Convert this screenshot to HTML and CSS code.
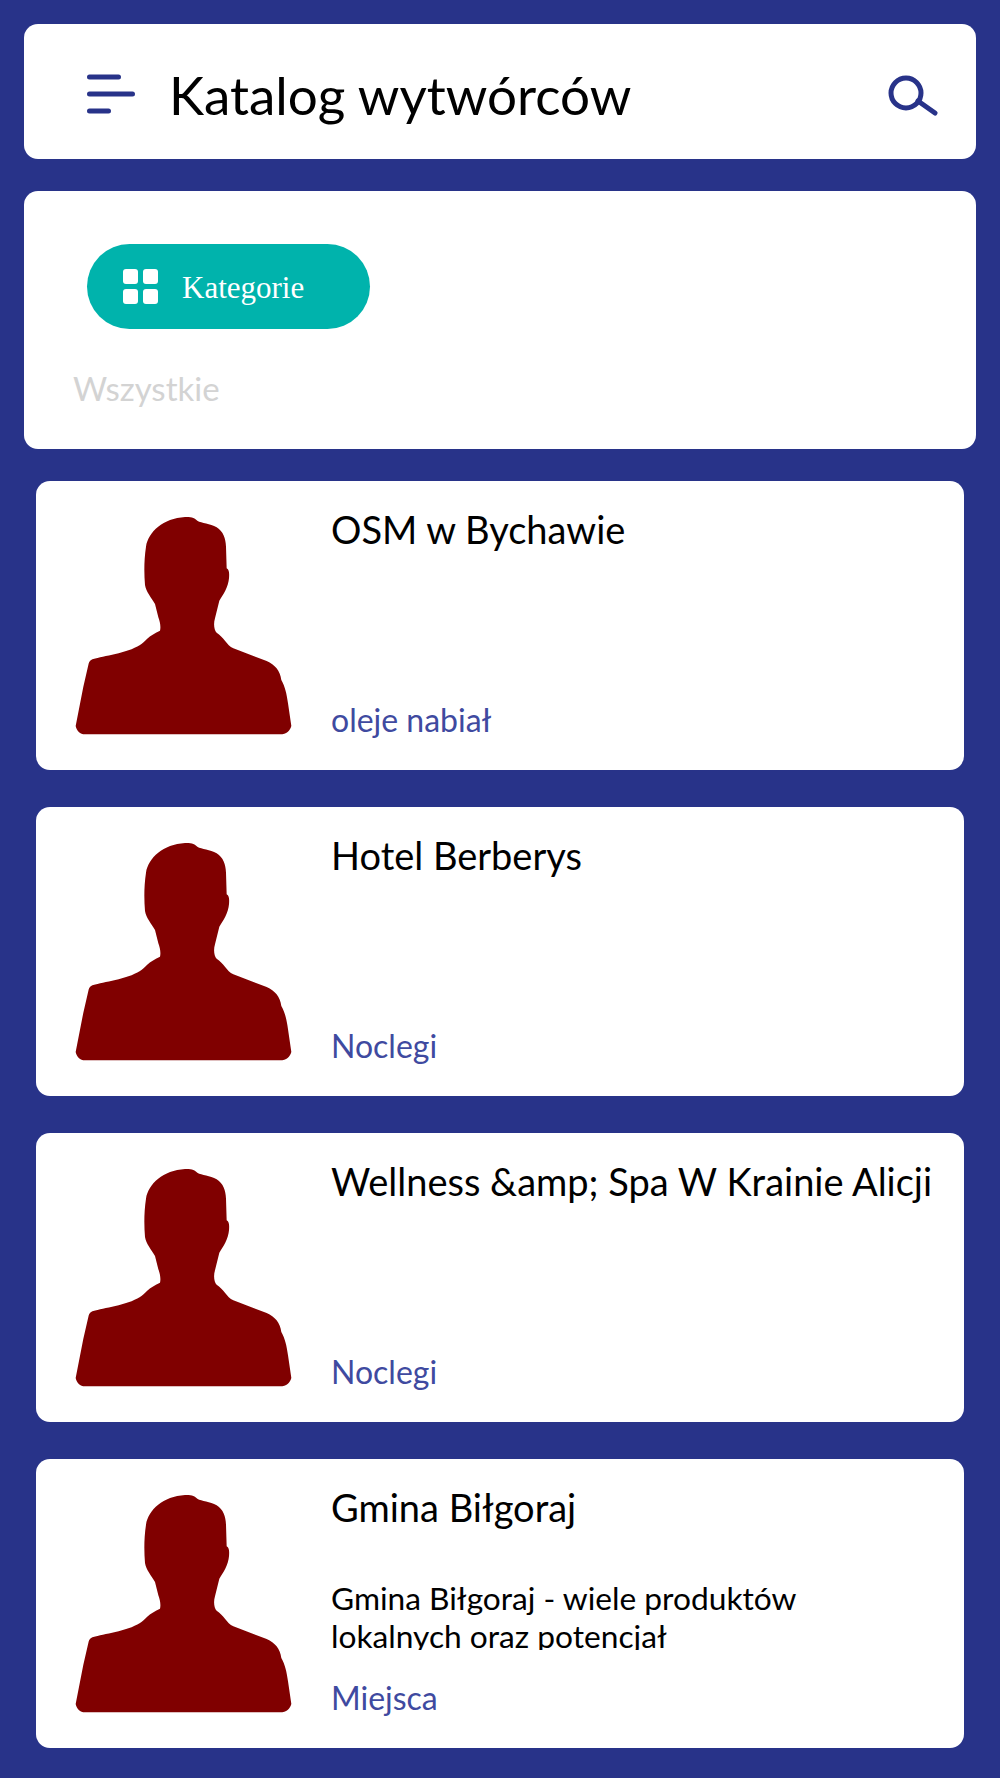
FILE: index.html
```html
<!DOCTYPE html>
<html lang="pl">
<head>
    <meta charset="UTF-8">
    <meta name="viewport" content="width=device-width, initial-scale=1.0">
    <title>Katalog wytwórców</title>
    <link rel="stylesheet" href="styles.css">
</head>
<body>
    <svg class="sprite" width="0" height="0">
        <symbol id="avatar" viewBox="0 0 780 840">
            <path d="M75 733C60 733 50 722 47 708L70 590L85 525C88 512 92 510 100 507C130 498 200 490 240 465C255 455 265 437 300 422C303 410 300 395 295 382L285 342C275 325 258 305 255 285C252 250 252 210 258 170C265 125 310 85 375 81C395 80 405 85 412 92C425 100 450 100 470 112C490 125 497 145 498 170L500 235C508 240 508 250 507 265C505 290 490 315 478 332L465 385C460 400 462 420 470 428C490 440 500 465 520 475L620 513C645 525 660 540 664 570C675 590 680 610 684 640L694 708C690 722 680 733 660 733Z"/>
        </symbol>
    </svg>

    <header class="topbar">
        <svg class="menu-icon" width="48" height="40" viewBox="0 0 48 40">
            <path d="M2.500 3H31.500M2.500 20H45.500M2.500 37H21.500"/>
        </svg>
        <h1 class="page-title">Katalog wytwórców</h1>
        <svg class="search-icon" width="52" height="44" viewBox="0 0 52 44">
            <circle cx="20" cy="21" r="15"/>
            <path d="M32 29L49 41"/>
        </svg>
    </header>

    <section class="filters">
        <button class="category-btn">
            <span class="grid-icon"><i></i><i></i><i></i><i></i></span>
            <span class="category-label">Kategorie</span>
        </button>
        <div class="filter-current">Wszystkie</div>
    </section>

    <main class="list">
        <article class="card">
            <svg class="avatar"><use href="#avatar"/></svg>
            <div class="card-body">
                <h2 class="card-title">OSM w Bychawie</h2>
                <div class="card-category">oleje nabiał</div>
            </div>
        </article>
        <article class="card">
            <svg class="avatar"><use href="#avatar"/></svg>
            <div class="card-body">
                <h2 class="card-title">Hotel Berberys</h2>
                <div class="card-category">Noclegi</div>
            </div>
        </article>
        <article class="card">
            <svg class="avatar"><use href="#avatar"/></svg>
            <div class="card-body">
                <h2 class="card-title">Wellness &amp;amp; Spa W Krainie Alicji</h2>
                <div class="card-category">Noclegi</div>
            </div>
        </article>
        <article class="card">
            <svg class="avatar"><use href="#avatar"/></svg>
            <div class="card-body">
                <h2 class="card-title">Gmina Biłgoraj</h2>
                <p class="card-desc">Gmina Biłgoraj - wiele produktów lokalnych oraz potencjał</p>
                <div class="card-category">Miejsca</div>
            </div>
        </article>
    </main>
</body>
</html>
```

FILE: styles.css
```css
* {
    box-sizing: border-box;
}
body {
    margin: 0;
    padding: 24px 24px 30px;
    background: #283389;
    font-family: Lato, "Noto Sans", sans-serif;
    color: #000;
}
.sprite {
    position: absolute;
}
.topbar {
    display: flex;
    align-items: center;
    height: 135px;
    padding: 5px 38px 0 63px;
    background: #fff;
    border-radius: 14px;
}
.menu-icon path {
    fill: none;
    stroke: #283389;
    stroke-width: 5px;
    stroke-linecap: round;
}
.page-title {
    flex: 1;
    margin: 2px 0 0 34px;
    font-size: 53px;
    font-weight: 400;
    line-height: 60px;
}
.search-icon circle, .search-icon path {
    fill: none;
    stroke: #283389;
    stroke-width: 5px;
    stroke-linecap: round;
}
.filters {
    height: 258px;
    margin-top: 32px;
    padding: 53px 63px 0;
    background: #fff;
    border-radius: 14px;
}
.category-btn {
    display: flex;
    align-items: center;
    width: 283px;
    height: 85px;
    padding: 0 0 0 36px;
    border: none;
    border-radius: 43px;
    background: #00b3ac;
    color: #fff;
    font-family: "Liberation Serif", serif;
    font-size: 31px;
}
.category-label {
    padding-top: 2px;
}
.grid-icon {
    display: grid;
    grid-template-columns: 15px 15px;
    gap: 5px;
    margin-right: 24px;
}
.grid-icon i {
    height: 15px;
    background: #fff;
    border-radius: 3px;
}
.filter-current {
    margin: 37px 0 0 -14px;
    font-size: 33px;
    line-height: 44px;
    color: #d3d3d3;
}
.list {
    display: flex;
    flex-direction: column;
    gap: 37px;
    margin-top: 32px;
    padding: 0 12px;
}
.card {
    display: flex;
    height: 289px;
    background: #fff;
    border-radius: 14px;
}
.avatar {
    flex: none;
    width: 260px;
    height: 280px;
    margin: 9px 11px 0 24px;
    fill: #800000;
}
.card-body {
    flex: 1;
    display: flex;
    flex-direction: column;
    min-width: 0;
    padding: 26px 0 31px;
}
.card-title {
    margin: 0;
    font-size: 38px;
    font-weight: 400;
    line-height: 44px;
    white-space: nowrap;
}
.card-desc {
    width: 500px;
    height: 71px;
    margin: 50px 0 0;
    overflow: hidden;
    font-size: 31.700px;
    line-height: 38px;
}
.card-category {
    margin-top: auto;
    font-size: 32px;
    line-height: 38px;
    color: #3f4aa0;
}
```
